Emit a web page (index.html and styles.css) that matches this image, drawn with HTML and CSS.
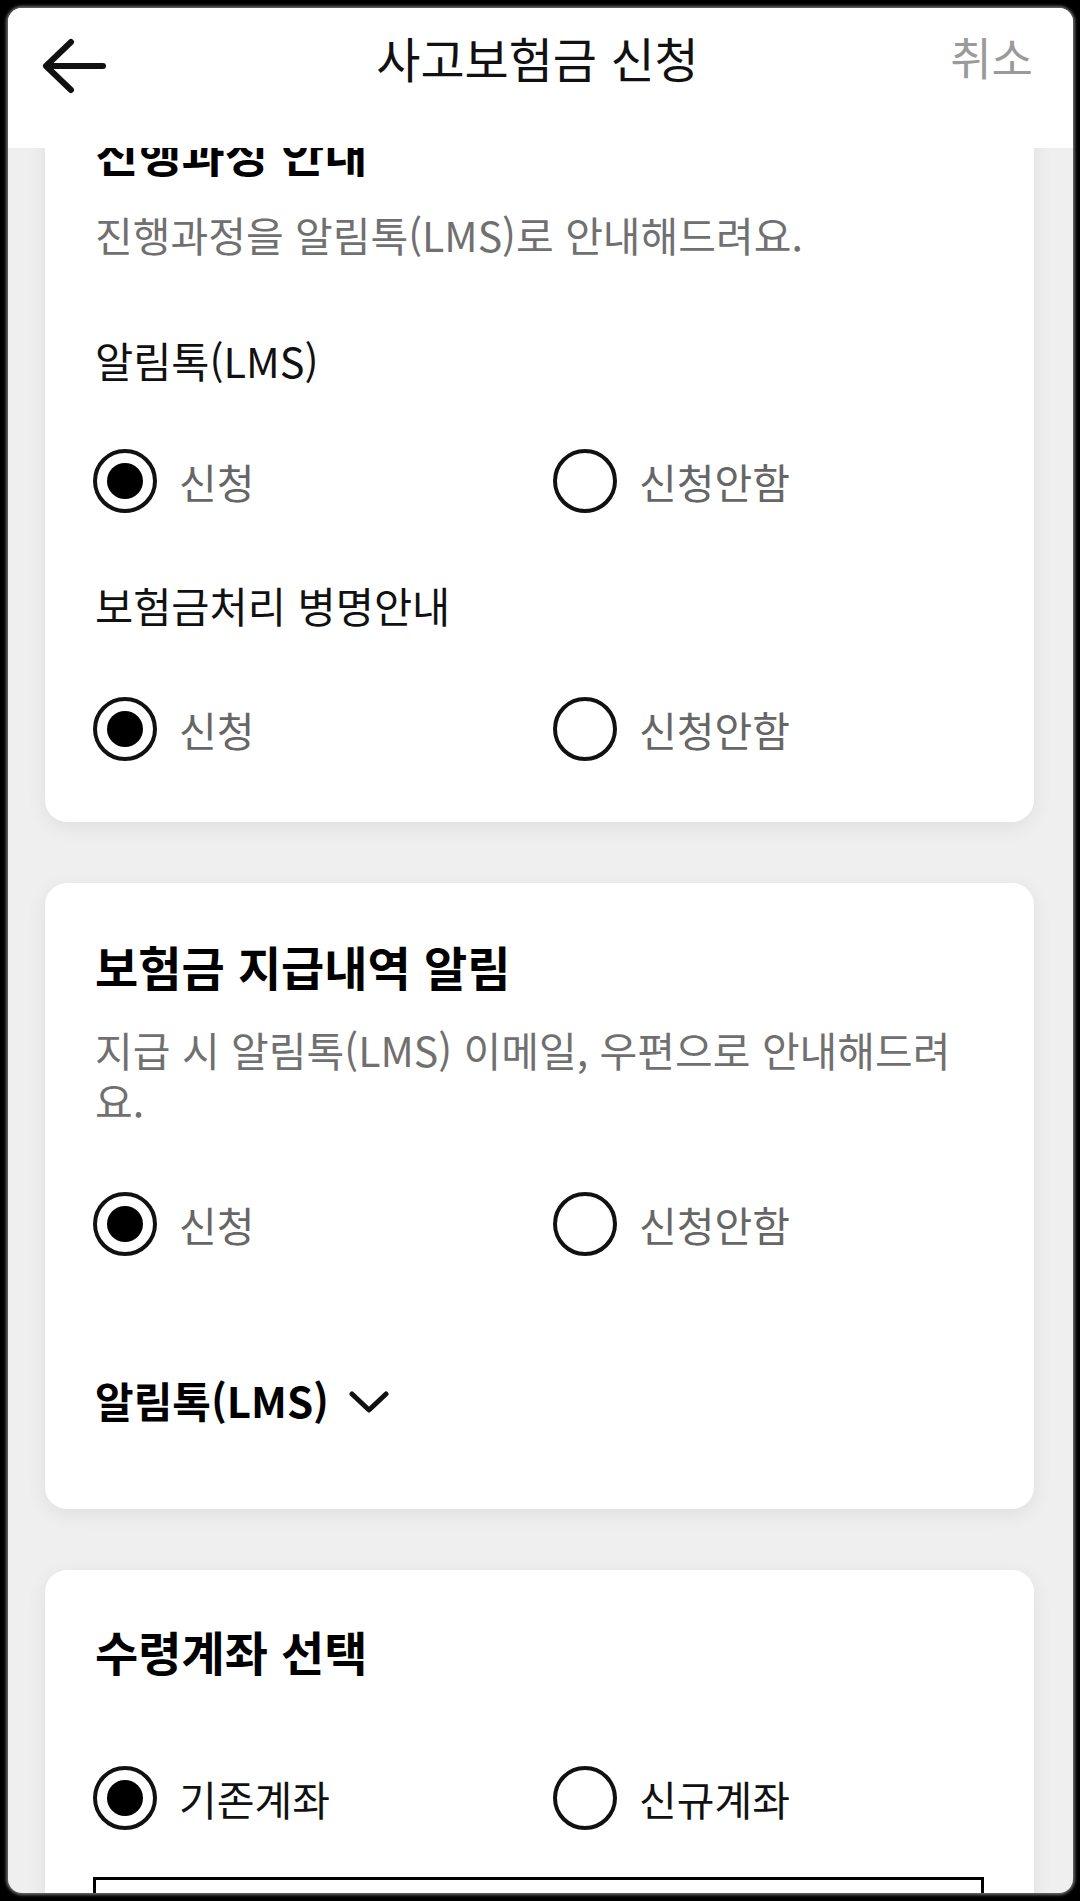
FILE: index.html
```html
<!DOCTYPE html>
<html lang="ko">
<head>
<meta charset="utf-8">
<title>사고보험금 신청</title>
<link rel="stylesheet" href="styles.css">
</head>
<body>
<div class="screen">
  <header class="header">
    <div class="header-left">
      <svg class="back-icon" width="64" height="56" viewBox="0 0 64 56" aria-hidden="true">
        <path d="M61 28 H4 M29 4 L4 28 L29 52" fill="none" stroke="#111" stroke-width="6" stroke-linecap="round" stroke-linejoin="round"/>
      </svg>
    </div>
    <h1 class="header-title">사고보험금 신청</h1>
    <div class="header-right"><span class="header-cancel">취소</span></div>
  </header>
  <main class="scroll">
    <div class="content">
      <section class="card card--progress">
        <h2 class="card-title">진행과정 안내</h2>
        <p class="card-desc card-desc--first">진행과정을 알림톡(LMS)로 안내해드려요.</p>
        <div class="field-label field-label--first">알림톡(LMS)</div>
        <div class="radio-group radio-group--first">
          <label class="radio-option"><span class="radio radio--on"></span><span class="radio-text">신청</span></label>
          <label class="radio-option"><span class="radio"></span><span class="radio-text">신청안함</span></label>
        </div>
        <div class="field-label">보험금처리 병명안내</div>
        <div class="radio-group radio-group--second">
          <label class="radio-option"><span class="radio radio--on"></span><span class="radio-text">신청</span></label>
          <label class="radio-option"><span class="radio"></span><span class="radio-text">신청안함</span></label>
        </div>
      </section>

      <section class="card card--payment">
        <h2 class="card-title">보험금 지급내역 알림</h2>
        <p class="card-desc">지급 시 알림톡(LMS) 이메일, 우편으로 안내해드려요.</p>
        <div class="radio-group radio-group--after-desc">
          <label class="radio-option"><span class="radio radio--on"></span><span class="radio-text">신청</span></label>
          <label class="radio-option"><span class="radio"></span><span class="radio-text">신청안함</span></label>
        </div>
        <div class="dropdown">
          <span class="dropdown-text">알림톡(LMS)</span>
          <svg class="dropdown-icon" width="40" height="24" viewBox="0 0 40 24" aria-hidden="true">
            <path d="M3 4 L20 20 L37 4" fill="none" stroke="#111" stroke-width="5" stroke-linecap="round" stroke-linejoin="round"/>
          </svg>
        </div>
      </section>

      <section class="card card--account">
        <h2 class="card-title">수령계좌 선택</h2>
        <div class="radio-group radio-group--account">
          <label class="radio-option"><span class="radio radio--on"></span><span class="radio-text radio-text--dark">기존계좌</span></label>
          <label class="radio-option"><span class="radio"></span><span class="radio-text radio-text--dark">신규계좌</span></label>
        </div>
        <div class="account-box"></div>
      </section>
    </div>
  </main>
</div>
</body>
</html>
```

FILE: styles.css
```css
* { box-sizing: border-box; }

html, body {
  margin: 0;
  padding: 0;
  background: #000;
  height: 1901px;
  overflow: hidden;
}

body {
  font-family: "Noto Sans CJK KR", "Noto Sans", sans-serif;
  color: #111;
}

.screen {
  margin: 8px 7px 8px 8px;
  width: 1065px;
  height: 1885px;
  background: #efefef;
  border-radius: 14px;
  overflow: hidden;
  display: flex;
  flex-direction: column;
  box-shadow: 0 0 3px 2px rgba(150, 150, 150, 0.7);
}

.header {
  flex: none;
  height: 140px;
  background: #fff;
  display: grid;
  grid-template-columns: 1fr auto 1fr;
  align-items: center;
  padding: 0 40px 28px 34px;
}

.header-left { display: flex; align-items: center; }
.back-icon { display: block; margin-top: 4px; }

.header-title {
  margin: 0 0 14px;
  font-size: 48px;
  font-weight: 400;
  line-height: 60px;
  color: #111;
  white-space: nowrap;
}

.header-right { display: flex; justify-content: flex-end; }
.header-cancel {
  margin-bottom: 14px;
  font-size: 45px;
  line-height: 60px;
  color: #9a9a9a;
}

.scroll {
  flex: 1;
  overflow: hidden;
}

.content {
  margin-top: -82px;
  padding: 0 39px 0 37px;
  display: flex;
  flex-direction: column;
  gap: 61px;
}

.card {
  background: #fff;
  border-radius: 22px;
  box-shadow: 0 5px 20px rgba(0, 0, 0, 0.07);
  padding: 56px 50px 61px;
}

.card--payment { padding-top: 53px; padding-bottom: 79px; }
.card--account { padding-top: 51px; padding-bottom: 0; height: 400px; }

.card-title {
  margin: 0;
  font-size: 47px;
  line-height: 60px;
  font-weight: 700;
  color: #000;
  white-space: nowrap;
}

.card-desc {
  margin: 28px 0 0;
  font-size: 41px;
  line-height: 51px;
  color: #707070;
}
.card-desc--first { margin-top: 27px; }

.field-label {
  margin-top: 66px;
  font-size: 41.5px;
  line-height: 52px;
  color: #111;
}
.field-label--first { margin-top: 74px; }

.radio-group {
  margin-left: -2px;
  display: grid;
  grid-template-columns: 460px 1fr;
}
.radio-group--first { margin-top: 63px; }
.radio-group--second { margin-top: 66px; }
.radio-group--after-desc { margin-top: 66px; }
.radio-group--account { margin-top: 85px; }

.radio-option {
  display: flex;
  align-items: center;
  gap: 22px;
}

.radio {
  flex: none;
  width: 64px;
  height: 64px;
  border: 4px solid #111;
  border-radius: 50%;
  display: grid;
  place-items: center;
}
.radio--on::after {
  content: "";
  width: 36px;
  height: 36px;
  border-radius: 50%;
  background: #000;
}

.radio-text {
  font-size: 41px;
  line-height: 52px;
  color: #666;
}
.radio-text--dark { color: #111; }

.dropdown {
  margin-top: 114px;
  display: flex;
  align-items: center;
  gap: 20px;
}
.dropdown-text {
  font-size: 42px;
  line-height: 60px;
  font-weight: 700;
  color: #000;
}
.dropdown-icon { display: block; margin-top: 4px; }

.account-box {
  margin-top: 47px;
  margin-left: -2px;
  height: 160px;
  border: 3px solid #000;
}
```
